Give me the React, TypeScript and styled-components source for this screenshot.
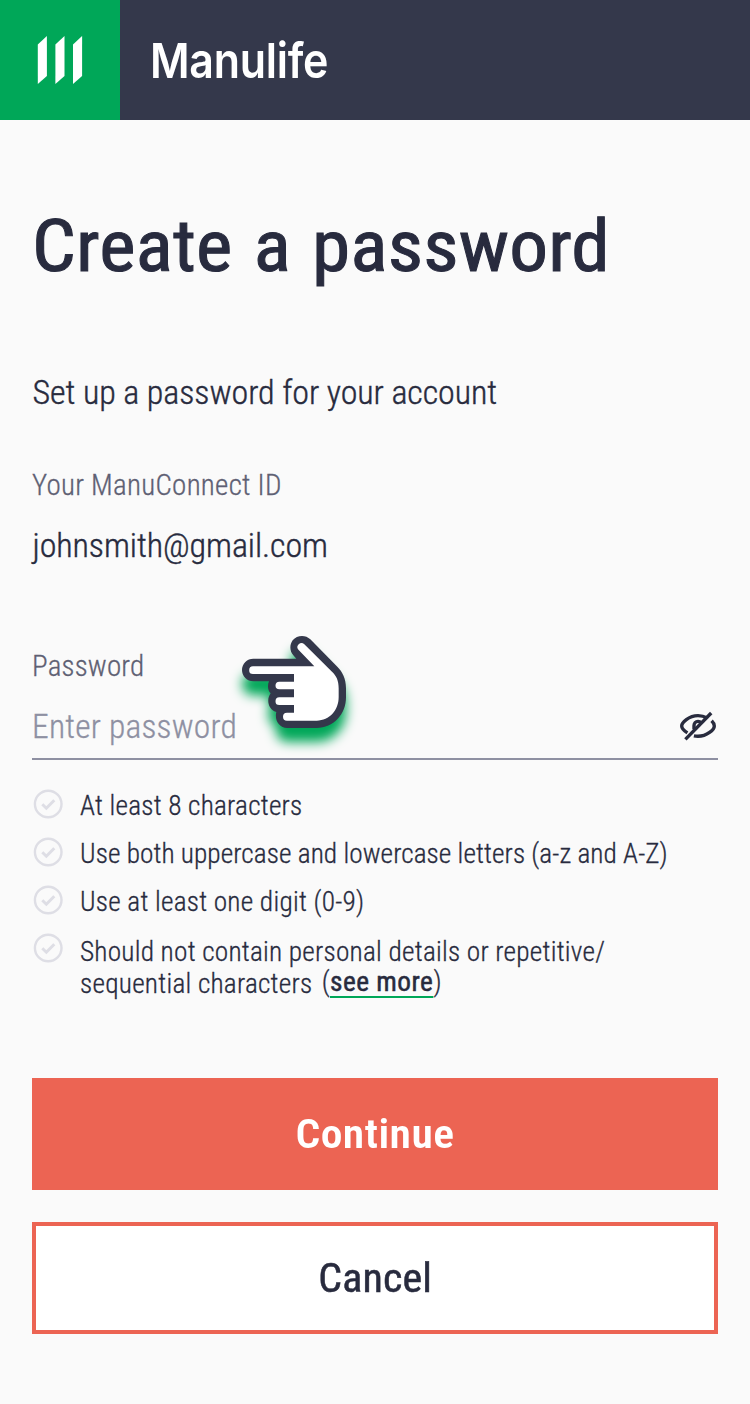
import React from "react";
import styled, { createGlobalStyle } from "styled-components";

const color = {
  page: "#fafafa",
  navy: "#34384b",
  ink: "#282b3e",
  label: "#5e6073",
  muted: "#8e90a2",
  tick: "#dedee5",
  green: "#00a758",
  coral: "#ec6453",
};

const GlobalStyle = createGlobalStyle`
  * { box-sizing: border-box; }
  body {
    margin: 0;
    background: ${color.page};
    color: ${color.ink};
    font-family: Roboto, "Open Sans", sans-serif;
    font-stretch: 75%;
    font-weight: 300;
  }
  h1, p, ul { margin: 0; padding: 0; }
`;

const Page = styled.div`
  display: flex;
  flex-direction: column;
  width: 750px;
  min-height: 1404px;
`;

const Header = styled.header`
  display: flex;
  align-items: center;
  height: 120px;
  background: ${color.navy};
`;

const LogoTile = styled.div`
  width: 120px;
  height: 120px;
  background: ${color.green};
`;

const Wordmark = styled.span`
  display: inline-block;
  margin: 2px 0 0 30px;
  font-family: Inter, sans-serif;
  font-stretch: 100%;
  font-size: 48.5px;
  line-height: 60px;
  font-weight: 600;
  letter-spacing: -0.3px;
  color: #fff;
  transform: scaleX(0.885);
  transform-origin: left center;
`;

const Main = styled.main`
  display: flex;
  flex-direction: column;
  padding: 83px 32px 70px;
`;

const Title = styled.h1`
  align-self: flex-start;
  font-size: 73px;
  line-height: 86px;
  padding-bottom: 2px;
  font-weight: 400;
  letter-spacing: 0.2px;
  word-spacing: 3px;
  -webkit-text-stroke: 1px currentColor;
  transform: scaleX(1.06);
  transform-origin: left center;
`;

const Lead = styled.p`
  margin-top: 77px;
  padding-left: 0.5px;
  font-size: 34px;
  line-height: 48px;
  letter-spacing: -0.07px;
  -webkit-text-stroke: 0.4px currentColor;
`;

const Label = styled.p<{ $top: number; $spacing: number }>`
  margin-top: ${(p) => p.$top}px;
  font-size: 29px;
  line-height: 40px;
  letter-spacing: ${(p) => p.$spacing}px;
  color: ${color.label};
  -webkit-text-stroke: 0.3px currentColor;
`;

const Value = styled.p`
  margin-top: 16px;
  padding-left: 0.5px;
  font-size: 34px;
  line-height: 48px;
  letter-spacing: -0.08px;
  -webkit-text-stroke: 0.4px currentColor;
`;

const PasswordGroup = styled.div`
  position: relative;
`;

const Field = styled.div`
  display: flex;
  align-items: center;
  justify-content: space-between;
  height: 74px;
  padding: 17px 0 7px;
  border-bottom: 2px solid ${color.muted};
`;

const Placeholder = styled.span`
  font-size: 33.5px;
  line-height: 48px;
  letter-spacing: 0.22px;
  color: ${color.muted};
  -webkit-text-stroke: 0.3px currentColor;
`;

const Pointer = styled.svg`
  position: absolute;
  left: 193px;
  top: 56px;
  overflow: visible;
  filter: drop-shadow(0 14px 6px ${color.green});
`;

const Rules = styled.ul`
  display: flex;
  flex-direction: column;
  gap: 16px;
  margin-top: 29px;
  list-style: none;
`;

const Rule = styled.li<{ $spacing: number; $drop?: number }>`
  display: flex;
  gap: 16px;
  min-height: 32px;
  font-size: 27.3px;
  line-height: 32px;
  letter-spacing: ${(p) => p.$spacing}px;
  white-space: nowrap;
  -webkit-text-stroke: 0.3px currentColor;

  > svg {
    flex: none;
  }
  > div {
    margin-top: ${(p) => 1 + (p.$drop ?? 0)}px;
    margin-bottom: -1px;
  }
`;

const MoreNote = styled.span`
  margin-left: 3px;
  line-height: 0;
  vertical-align: 2px;
`;

const MoreLink = styled.a`
  font-weight: 400;
  letter-spacing: 0.5px;
  text-decoration: underline 2px ${color.green};
  text-underline-offset: 5px;
  text-decoration-skip-ink: none;
  -webkit-text-stroke: 0.5px currentColor;
`;

const Actions = styled.div`
  display: flex;
  flex-direction: column;
  gap: 32px;
  margin-top: 79px;
`;

const Button = styled.button<{ $primary?: boolean }>`
  height: 112px;
  padding: 2px 0 0;
  border: 4px solid ${color.coral};
  border-radius: 0;
  background: ${(p) => (p.$primary ? color.coral : "#fff")};
  color: ${(p) => (p.$primary ? "#fff" : color.ink)};
  font-family: inherit;
  font-stretch: inherit;
  font-size: 40px;
  line-height: 48px;
  font-weight: ${(p) => (p.$primary ? 600 : 400)};
  letter-spacing: ${(p) => (p.$primary ? 0.4 : 0.1)}px;
  -webkit-text-stroke: ${(p) => (p.$primary ? 0 : 0.5)}px currentColor;
`;

const ButtonText = styled.span<{ $stretch: number }>`
  display: inline-block;
  transform: scaleX(${(p) => p.$stretch});
`;

const LogoMark = () => (
  <svg width="120" height="120" viewBox="0 0 120 120" fill="#fff">
    {[37.8, 55.4, 73].map((x) => (
      <path key={x} d={`M${x} 44.6l9.1-8.6v40l-9.1 8.1z`} />
    ))}
  </svg>
);

const TickIcon = () => (
  <svg width="32" height="32" viewBox="0 0 32 32" fill="none" stroke={color.tick}>
    <circle cx="16.2" cy="15" r="13.3" strokeWidth="2.4" />
    <path d="M10.3 15.3l4 3.9 8-8" strokeWidth="3" />
  </svg>
);

const HiddenEyeIcon = () => (
  <svg width="40" height="32" viewBox="0 0 40 32" fill="none" stroke={color.ink} strokeWidth="3.4">
    <path d="M9.4 21.8C5.6 19.3 3.7 16.7 3.7 14.9 3.7 11.6 10.6 4.6 20 4.6c3.6 0 6.7 1 9.2 2.4" />
    <path d="M33.6 9.8c2 2 2.7 3.9 2.7 5.1 0 3.6-7.2 10.4-16.4 10.4-1.4 0-2.7-.1-4-.4" />
    <path d="M16 18.2v-3.4c0-2.6 1.7-4.4 4-4.4 1.4 0 2.4.5 3.2 1.4" />
    <path d="M7.4 28.4L33.2 2" />
  </svg>
);

const PointingHand = () => (
  <Pointer width="140" height="130" viewBox="0 0 420 390">
    <path
      fill={color.navy}
      d="M214 101H85a34 34 0 0 0 0 68H132C127 180 128 196 137 205 124 222 128 252 154 261 148 286 162 309 187 309H275C325 309 363 268 363 217V190C363 160 352 140 337 125L256 43C241 28 216 30 203 46 193 60 194 78 205 91Z"
    />
    <path
      fill="#fff"
      d="M268 124H84a11 11 0 0 0 0 23H207V170H163a11 11 0 0 0 0 23H207V217H163a11 11 0 0 0 0 23H207V263H186a12 12 0 0 0 0 24H275C314 287 341 255 341 217V190C341 165 334 153 321 140L238 58a11 11 0 0 0-17 17Z"
    />
  </Pointer>
);

export default function App() {
  return (
    <Page>
      <GlobalStyle />
      <Header>
        <LogoTile>
          <LogoMark />
        </LogoTile>
        <Wordmark>Manulife</Wordmark>
      </Header>
      <Main>
        <Title>Create a password</Title>
        <Lead>Set up a password for your account</Lead>
        <Label $top={49} $spacing={0.27}>Your ManuConnect ID</Label>
        <Value>johnsmith@gmail.com</Value>
        <PasswordGroup>
          <Label $top={77} $spacing={0.18}>Password</Label>
          <Field>
            <Placeholder>Enter password</Placeholder>
            <HiddenEyeIcon />
          </Field>
          <PointingHand />
        </PasswordGroup>
        <Rules>
          <Rule $spacing={0.22}>
            <TickIcon />
            <div>At least 8 characters</div>
          </Rule>
          <Rule $spacing={0.06}>
            <TickIcon />
            <div>Use both uppercase and lowercase letters (a-z and A-Z)</div>
          </Rule>
          <Rule $spacing={0.23}>
            <TickIcon />
            <div>Use at least one digit (0-9)</div>
          </Rule>
          <Rule $spacing={0.23} $drop={2}>
            <TickIcon />
            <div>
              Should not contain personal details or repetitive/
              <br />
              sequential characters{" "}
              <MoreNote>
                (<MoreLink>see more</MoreLink>)
              </MoreNote>
            </div>
          </Rule>
        </Rules>
        <Actions>
          <Button $primary>
            <ButtonText $stretch={1.09}>Continue</ButtonText>
          </Button>
          <Button>
            <ButtonText $stretch={1.05}>Cancel</ButtonText>
          </Button>
        </Actions>
      </Main>
    </Page>
  );
}
